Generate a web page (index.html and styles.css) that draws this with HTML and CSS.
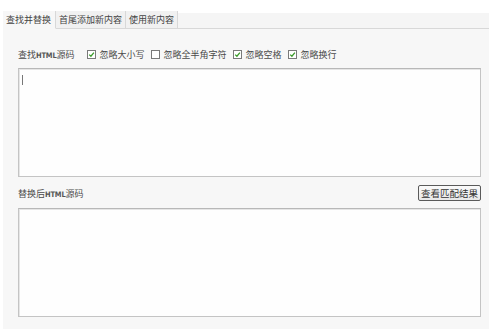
FILE: index.html
```html
<!DOCTYPE html>
<html lang="zh">
<head>
<meta charset="utf-8">
<link rel="stylesheet" href="styles.css">
</head>
<body>
<div class="panel">
  <div class="tabs">
    <div class="tab active">查找并替换</div>
    <div class="tab">首尾添加新内容</div>
    <div class="tab">使用新内容</div>
    <div class="tab-fill"></div>
  </div>
  <div class="content">
    <div class="row options">
      <span class="label">查找<span class="lat">HTML</span>源码</span>
      <label class="opt"><span class="cb on"><svg viewBox="0 0 7 7" width="7" height="7"><path d="M1.2 3.6 L2.9 5.2 L5.9 1.6" fill="none" stroke="#3a9a2a" stroke-width="1.3"/></svg></span>忽略大小写</label>
      <label class="opt"><span class="cb"></span>忽略全半角字符</label>
      <label class="opt"><span class="cb on"><svg viewBox="0 0 7 7" width="7" height="7"><path d="M1.2 3.6 L2.9 5.2 L5.9 1.6" fill="none" stroke="#3a9a2a" stroke-width="1.3"/></svg></span>忽略空格</label>
      <label class="opt"><span class="cb on"><svg viewBox="0 0 7 7" width="7" height="7"><path d="M1.2 3.6 L2.9 5.2 L5.9 1.6" fill="none" stroke="#3a9a2a" stroke-width="1.3"/></svg></span>忽略换行</label>
    </div>
    <div class="box"><span class="caret"></span></div>
    <div class="row between">
      <span class="label">替换后<span class="lat">HTML</span>源码</span>
      <span class="btn">查看匹配结果</span>
    </div>
    <div class="box"></div>
  </div>
</div>
</body>
</html>
```
FILE: styles.css
```css
html, body {
  margin: 0;
  padding: 0;
  background: #ffffff;
}
body {
  font-family: "Noto Sans CJK SC", "Noto Sans", sans-serif;
  color: #4a4a4a;
  font-size: 9px;
  padding-top: 11px;
}
.panel {
  margin-left: 3px;
  width: 486px;
  height: 318px;
  background: #f7f7f7;
  display: flex;
  flex-direction: column;
}
.tabs {
  display: flex;
  height: 18px;
  background: #ffffff;
}
.tab {
  height: 17px;
  line-height: 17px;
  padding: 0 3px;
  background: #f1f1f1;
  border-bottom: 1px solid #d8d8d8;
  border-right: 1px solid #d8d8d8;
  color: #444;
  white-space: nowrap;
}
.tab.active {
  background: #f7f7f7;
  border-bottom-color: #f7f7f7;
  padding: 0 4px 0 3px;
}
.tab-fill {
  flex: 1;
  margin-top: 2px;
  height: 15px;
  background: #f5f5f5;
  border-bottom: 1px solid #d8d8d8;
}
.content {
  padding: 18px 8px 0 15px;
  display: flex;
  flex-direction: column;
}
.row {
  display: flex;
  align-items: center;
  height: 14px;
}
.options {
  margin-bottom: 7px;
}
.label {
  display: inline-flex;
  align-items: baseline;
  margin-right: 12px;
  color: #4a4a4a;
}
.lat {
  font-family: "DejaVu Sans Condensed", "Liberation Sans Narrow", sans-serif;
  font-size: 7.5px;
  font-weight: bold;
  letter-spacing: -0.2px;
  color: #555;
}
.opt {
  display: inline-flex;
  align-items: center;
  margin-right: 6px;
  color: #4a4a4a;
}
.cb {
  width: 7px;
  height: 7px;
  border: 1px solid #7a7a7a;
  background: #fff;
  margin-right: 4px;
  display: inline-flex;
}
.cb svg {
  width: 7px;
  height: 7px;
}
.box {
  height: 107px;
  background: #fefefe;
  border: 1px solid #c4c4c4;
  border-top-color: #b8b8b8;
  box-shadow: inset 1px 1px 0 #e6e6e6;
  position: relative;
}
.caret {
  position: absolute;
  left: 3px;
  top: 6px;
  width: 1px;
  height: 10px;
  background: #777;
}
.between {
  justify-content: space-between;
  margin-top: 8px;
  margin-bottom: 7px;
  height: 16px;
}
.btn {
  height: 14px;
  line-height: 14px;
  padding: 0 2px;
  border: 1px solid #5a5a5a;
  border-radius: 2px;
  background: linear-gradient(#fafafa, #e8e8e8);
  font-size: 9.5px;
  color: #333;
  margin-right: 0;
}
```
